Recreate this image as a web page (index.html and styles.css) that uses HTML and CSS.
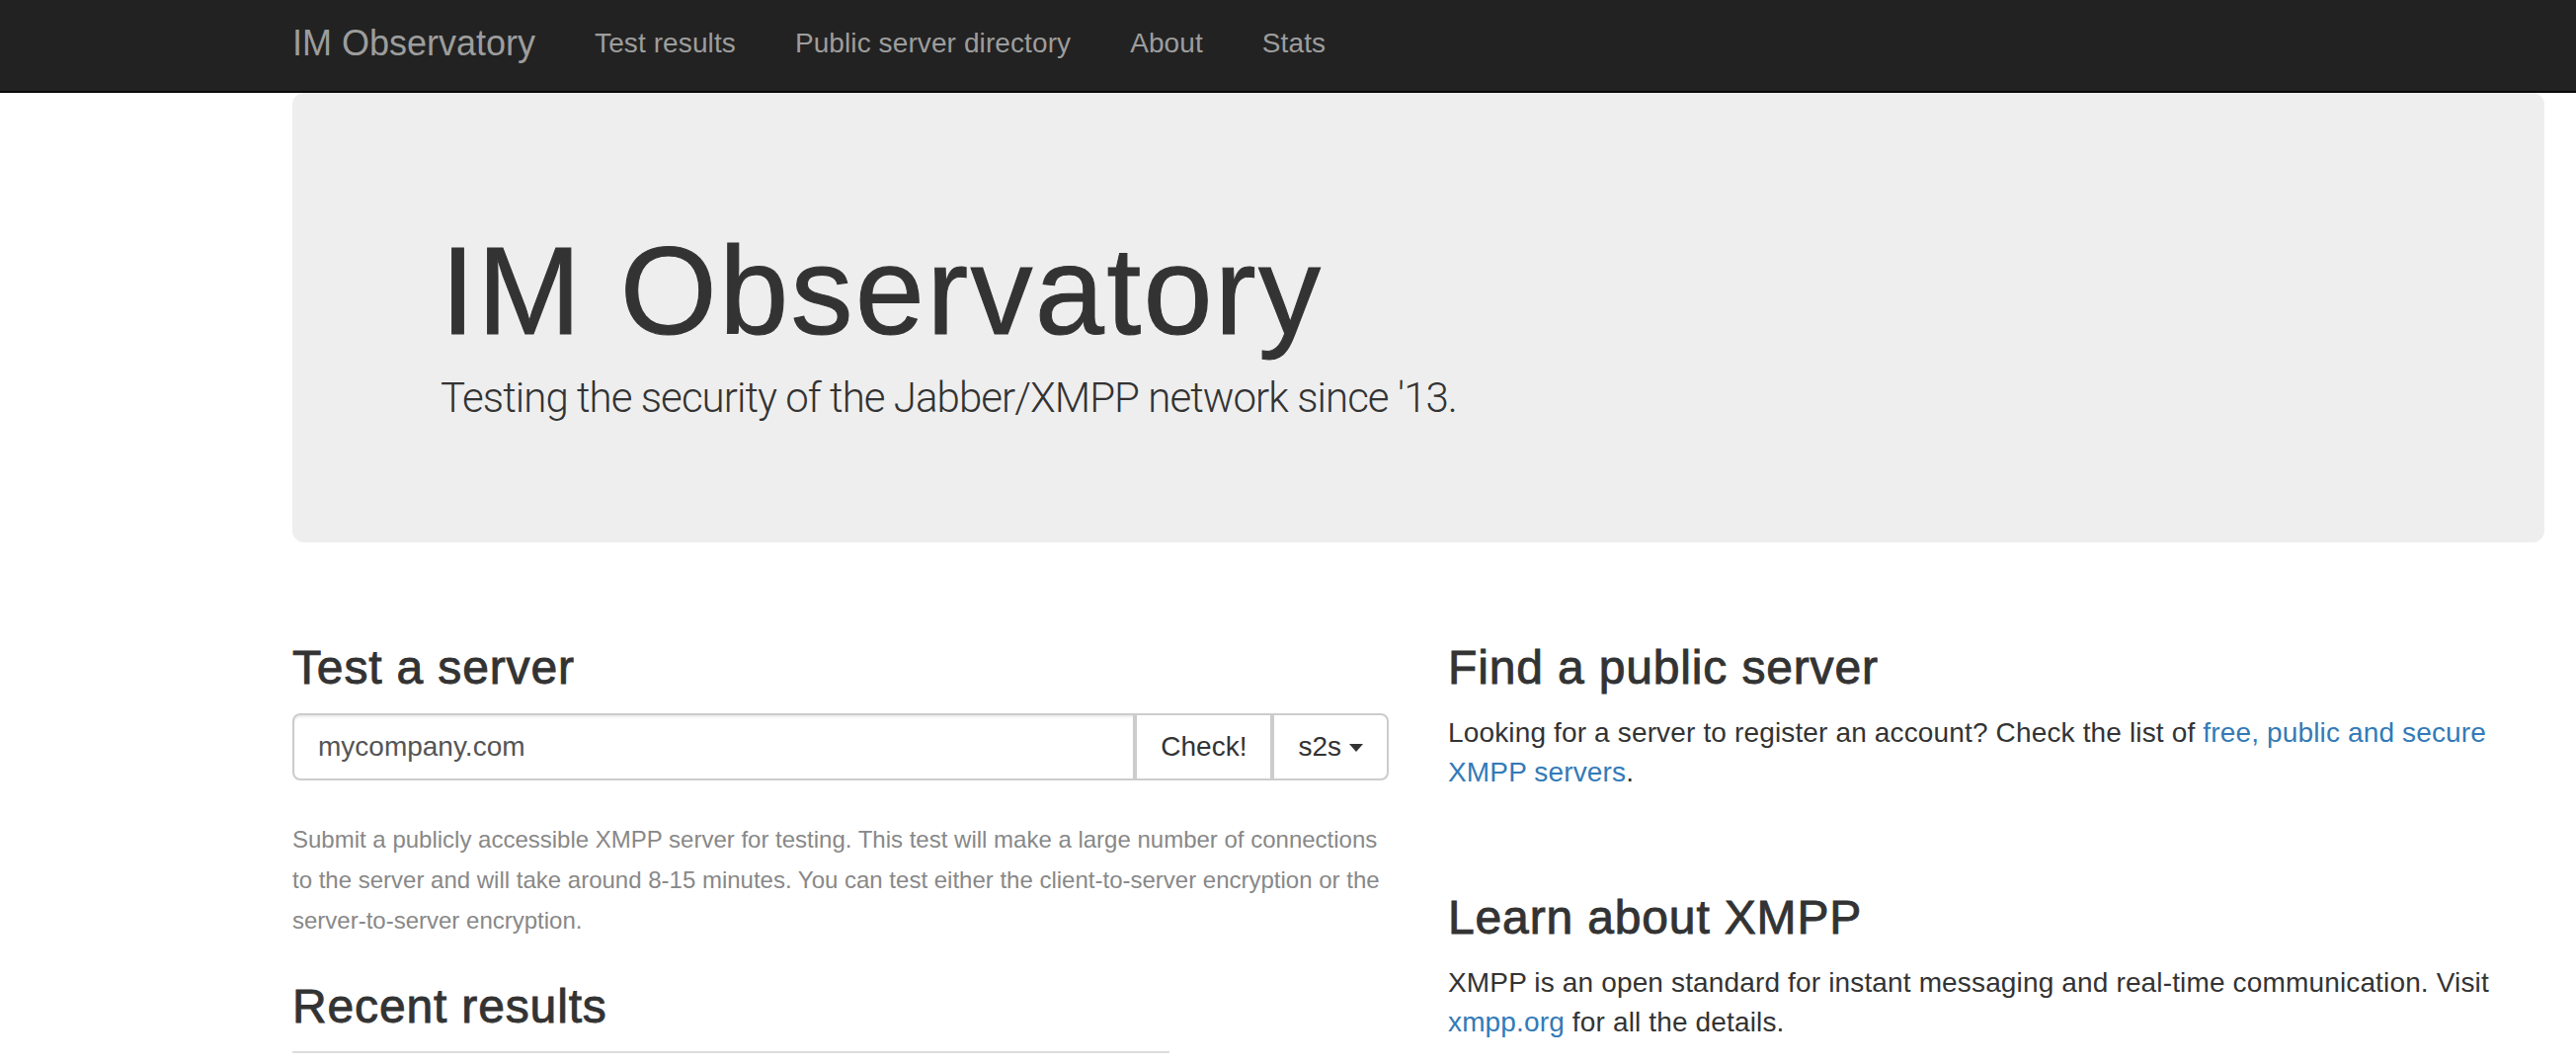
FILE: index.html
```html
<!DOCTYPE html>
<html lang="en">
<head>
<meta charset="utf-8">
<title>IM Observatory</title>
<link rel="stylesheet" href="styles.css">
</head>
<body>
<nav class="navbar">
  <div class="container nav-inner">
    <a class="brand" href="#">IM Observatory</a>
    <ul class="nav">
      <li><a href="#">Test results</a></li>
      <li><a href="#">Public server directory</a></li>
      <li><a href="#">About</a></li>
      <li><a href="#">Stats</a></li>
    </ul>
  </div>
</nav>
<div class="container">
  <div class="jumbotron">
    <h1>IM Observatory</h1>
    <p class="lead">Testing the security of the Jabber/XMPP network since '13.</p>
  </div>
  <div class="row">
    <div class="col">
      <h3>Test a server</h3>
      <form class="input-group">
        <input class="form-control" type="text" value="mycompany.com">
        <button class="btn" type="button">Check!</button>
        <button class="btn btn-last" type="button">s2s <span class="caret"></span></button>
      </form>
      <p class="help"><small>Submit a publicly accessible XMPP server for testing. This test will make a large number of connections to the server and will take around 8-15 minutes. You can test either the client-to-server encryption or the server-to-server encryption.</small></p>
      <h3 class="results-title">Recent results</h3>
      <div class="results-line"></div>
    </div>
    <div class="col">
      <h3>Find a public server</h3>
      <p class="body-text">Looking for a server to register an account? Check the list of <a href="#">free, public and secure XMPP servers</a>.</p>
      <h3 class="spaced">Learn about XMPP</h3>
      <p class="body-text">XMPP is an open standard for instant messaging and real-time communication. Visit <a href="#">xmpp.org</a> for all the details.</p>
    </div>
  </div>
</div>
</body>
</html>
```

FILE: styles.css
```css
html, body {
  margin: 0;
  padding: 0;
}
body {
  font-family: "Liberation Sans", Arial, Helvetica, sans-serif;
  font-size: 28px;
  line-height: 40px;
  color: #333;
  background: #fff;
  overflow: hidden;
}
a {
  color: #337ab7;
  text-decoration: none;
}
.container {
  width: 2280px;
  margin-left: 296px;
}
.navbar {
  background: #222;
  border-bottom: 2px solid #080808;
  height: 92px;
}
.nav-inner {
  display: flex;
  align-items: flex-start;
}
.brand {
  display: block;
  color: #9d9d9d;
  font-size: 36px;
  line-height: 40px;
  padding: 24px 30px 0 0;
}
.nav {
  display: flex;
  list-style: none;
  margin: 0;
  padding: 0;
}
.nav a {
  display: block;
  color: #9d9d9d;
  font-size: 28px;
  line-height: 40px;
  padding: 24px 30px 0;
  letter-spacing: 0.1px;
}
.jumbotron {
  background: #eee;
  border-radius: 12px;
  padding: 132px 150px 116px;
  margin-bottom: 60px;
}
.jumbotron h1 {
  margin: 0;
  font-size: 126px;
  line-height: 138px;
  font-weight: normal;
  color: #333;
  letter-spacing: 2.3px;
  -webkit-text-stroke: 1px #333;
}
.lead {
  margin: 9px 0 0;
  font-family: Roboto, "Liberation Sans", sans-serif;
  font-weight: 300;
  font-size: 42px;
  line-height: 60px;
  color: #333;
  letter-spacing: -0.95px;
}
.row {
  display: flex;
  margin: 0 -30px;
}
.col {
  width: 50%;
  padding: 0 30px;
  box-sizing: border-box;
}
h3 {
  font-size: 48px;
  line-height: 53px;
  font-weight: normal;
  margin: 40px 0 20px;
  color: #333;
  letter-spacing: 0.85px;
  -webkit-text-stroke: 0.9px #333;
}
h3.spaced {
  margin-top: 100px;
}
h3.results-title {
  margin-bottom: 19px;
}
p {
  margin: 0 0 20px;
}
.body-text {
  letter-spacing: 0.15px;
}
.input-group {
  display: flex;
  height: 68px;
  margin: 0 0 39px;
}
.form-control {
  flex: 1;
  min-width: 0;
  height: 68px;
  box-sizing: border-box;
  border: 2px solid #ccc;
  border-radius: 8px 0 0 8px;
  padding: 0 24px;
  font-family: "Liberation Sans", Arial, sans-serif;
  font-size: 28px;
  color: #555;
  box-shadow: inset 0 2px 2px rgba(0, 0, 0, 0.075);
  outline: none;
}
.btn {
  height: 68px;
  box-sizing: border-box;
  border: 2px solid #ccc;
  background: #fff;
  padding: 0 24px;
  font-family: "Liberation Sans", Arial, sans-serif;
  font-size: 28px;
  color: #333;
  border-radius: 0;
  display: flex;
  align-items: center;
  gap: 8px;
}
.btn-last {
  border-radius: 0 8px 8px 0;
}
.caret {
  display: inline-block;
  width: 0;
  height: 0;
  border-top: 8px solid #333;
  border-left: 7px solid transparent;
  border-right: 7px solid transparent;
  margin-top: 2px;
}
.help {
  color: #888;
}
.help small {
  font-size: 24px;
}
.results-line {
  width: 888px;
  border-top: 2px solid #ddd;
}
```
